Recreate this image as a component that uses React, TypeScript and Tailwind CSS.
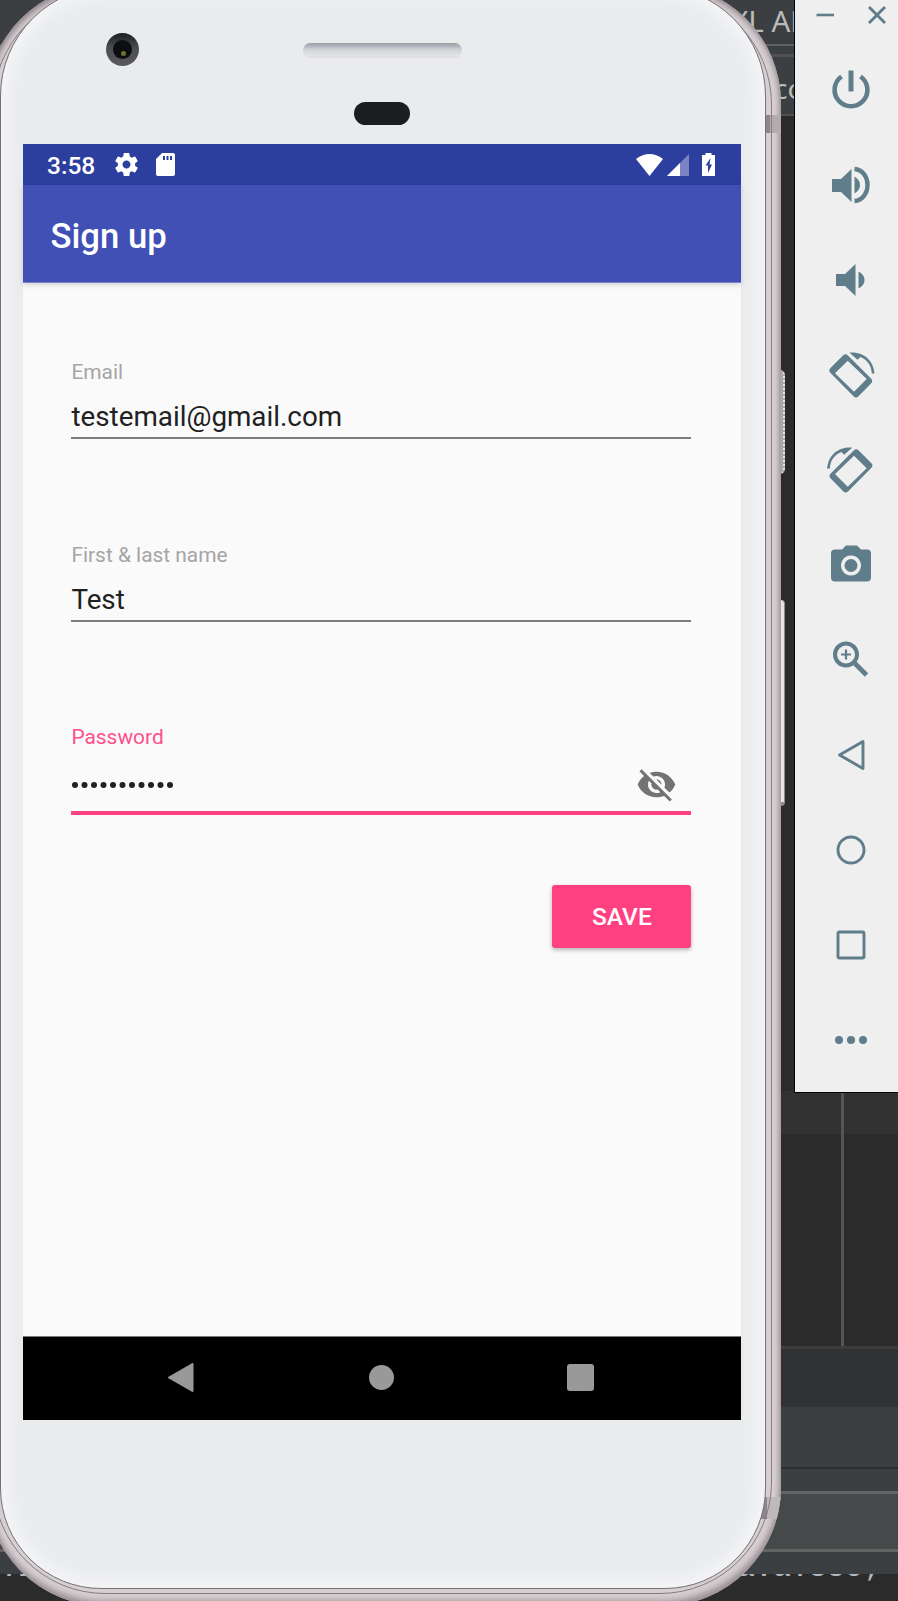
import React from "react";

const SLATE = "#607d8b";

function Tool({ children, size = 48, vb = "0 0 24 24" }: { children: React.ReactNode; size?: number; vb?: string }) {
  return (
    <div className="flex h-[95px] w-full items-center justify-center">
      <svg width={size} height={size} viewBox={vb} fill={SLATE} className="shrink-0 overflow-visible">
        {children}
      </svg>
    </div>
  );
}

function RotateGlyph() {
  return (
    <>
      <path
        fillRule="evenodd"
        d="M15 3.500q2.500-2.500 5 0L43 26.500q2.500 2.500 0 5L30.500 44.300q-2.500 2.500-5 0L2.500 21q-2.500-2.500 0-5zM19.700 8.700L7 21.300l19 18.400 12.700-12.700z"
      />
      <path d="M21.500 .7L29.500 7.800l3-2.800C39.500 8 43.500 13.500 43.800 21.500H46.500C45.500 8.500 35.500-.7 21.500 .7z" />
    </>
  );
}

function Toolbar() {
  return (
    <aside className="absolute top-0 left-[794px] flex h-[1093px] w-[104px] flex-col overflow-hidden border-b border-l border-black bg-[#efefef]">
      <div className="flex h-[42px] shrink-0 items-start">
        <svg width="103" height="30" viewBox="0 0 103 30" fill="none" stroke={SLATE}>
          <path d="M21.500 15H39" strokeWidth="2.600" />
          <path d="M74 7l16 16M90 7l-16 16" strokeWidth="2.900" />
        </svg>
      </div>
      <div className="flex shrink-0 flex-col pl-2">
        <Tool size={36} vb="0 0 36 36">
          <g transform="translate(0 -1.500)">
            <path d="M8.500 6A16.400 16.400 0 1 0 27.500 6" fill="none" stroke={SLATE} strokeWidth="4.600" />
            <path d="M15.500 0h5v21h-5z" />
          </g>
        </Tool>
        <Tool size={38} vb="0 0 38 38">
          <path d="M0 13v13h9l10.500 10V3L9 13zM22.500 10.500v17c3.500-2 5.500-5 5.500-8.500s-2-6.500-5.500-8.500z" />
          <path d="M22.500 3c8 .5 13 8 13 16s-5 15.500-13 16" fill="none" stroke={SLATE} strokeWidth="4.400" />
        </Tool>
        <Tool size={32} vb="0 0 32 32">
          <path d="M1 10v12h9L20.500 32V0L10 10zM23.500 7.500v17c3.500-2 6-4.500 6-8.500s-2.500-6.500-6-8.500z" />
        </Tool>
        <Tool size={46} vb="0 0 46 46">
          <RotateGlyph />
        </Tool>
        <Tool size={46} vb="0 0 46 46">
          <g transform="translate(45.700 0) scale(-1 1)">
            <RotateGlyph />
          </g>
        </Tool>
        <Tool size={40} vb="0 0 40 40">
          <g transform="translate(0 -1.500)">
            <path fillRule="evenodd" d="M4 6h7l4-4h11l4 4h6q4 0 4 4v24q0 4-4 4H4q-4 0-4-4V10q0-4 4-4zm16 6a10 10 0 1 0 .01 0z" />
            <circle cx="20" cy="22" r="6.500" />
          </g>
        </Tool>
        <Tool size={36} vb="0 0 36 36">
          <g fill="none" stroke={SLATE} transform="translate(0 -1.500)">
            <circle cx="13" cy="14" r="11" strokeWidth="4" />
            <path d="M22 23l11.500 11.500" strokeWidth="4.800" />
            <path d="M8 14h10M13 9v10" strokeWidth="2.200" />
          </g>
        </Tool>
        <Tool size={30} vb="0 0 30 30">
          <path d="M27 1.500v27L3.500 15z" fill="none" stroke={SLATE} strokeWidth="2.900" strokeLinejoin="round" />
        </Tool>
        <Tool size={30} vb="0 0 30 30">
          <circle cx="15" cy="15" r="13" fill="none" stroke={SLATE} strokeWidth="2.900" />
        </Tool>
        <Tool size={30} vb="0 0 30 30">
          <rect x="2" y="2" width="26" height="26" rx="1.500" fill="none" stroke={SLATE} strokeWidth="2.900" />
        </Tool>
        <Tool size={32} vb="0 0 32 32">
          <circle cx="4" cy="16" r="4" />
          <circle cx="16" cy="16" r="4" />
          <circle cx="28" cy="16" r="4" />
        </Tool>
      </div>
    </aside>
  );
}

function Ide() {
  return (
    <div className="flex h-[1601px] w-full flex-col bg-[#2b2b2b]">
      <div className="flex h-[44px] shrink-0 bg-[#3c3f41] pl-[731px] font-['Noto_Sans'] text-[29.500px] leading-[42px] text-[#bbbbbb]">XL API</div>
      <div className="h-[2px] shrink-0 bg-[#5e6060]" />
      <div className="h-[8px] shrink-0 bg-[#3c3f41]" />
      <div className="h-[3px] shrink-0 bg-[#515151]" />
      <div className="flex h-[57px] shrink-0 bg-[#3c3f41] pl-[774px] font-['Noto_Sans'] text-[28px] leading-[63px] text-[#bbbbbb]">com</div>
      <div className="h-[2px] shrink-0 bg-[#515151]" />
      <div className="h-[975px] shrink-0" />
      <div className="flex h-[43px] shrink-0 justify-end bg-[#323232] pr-[54px]"><div className="w-[3px] bg-[#555555]" /></div>
      <div className="flex h-[212px] shrink-0 justify-end pr-[54px]"><div className="w-[3px] bg-[#555555]" /></div>
      <div className="h-[3px] shrink-0 bg-[#3a3c3d]" />
      <div className="h-[58px] shrink-0 bg-[#313234]" />
      <div className="h-[60px] shrink-0 bg-[#3c3f41]" />
      <div className="h-[2px] shrink-0 bg-[#2f2f2f]" />
      <div className="h-[22px] shrink-0 bg-[#3c3f41]" />
      <div className="h-[3px] shrink-0 bg-[#646464]" />
      <div className="h-[55px] shrink-0 bg-[#45494a]" />
      <div className="h-[3px] shrink-0 bg-[#646464]" />
      <div className="h-[22px] shrink-0 bg-[#3c3f41]" />
      <div className="flex h-[27px] shrink-0 justify-between overflow-hidden pr-[17px] font-['Liberation_Mono'] text-[30px] leading-[30px] text-[#b5b9bd]">
        <span className="-mt-[21px]">.1</span>
        <span className="-mt-[21px]">java.sso;</span>
      </div>
    </div>
  );
}

function Field({ label, children, accent = false }: { label: string; children: React.ReactNode; accent?: boolean }) {
  return (
    <div className={accent ? "flex h-[91px] flex-col border-b-4 border-[#ff4081]" : "flex h-[80px] flex-col border-b-2 border-[#7c7c7c]"}>
      <span className={accent ? "text-[20.900px] leading-[26px] text-[#ff4f8b]" : "text-[20.900px] leading-[26px] text-[#a5a5a5]"}>{label}</span>
      {children}
    </div>
  );
}

function Screen() {
  return (
    <div className="flex h-[1276px] w-[718px] shrink-0 flex-col bg-[#fafafa] font-[Roboto]">
      <div className="flex h-[41px] shrink-0 items-center bg-[#2c3e9e] pr-[26px] pl-[24px] text-white">
        <span className="w-[68px] pt-[3px] text-[24.500px] font-medium">3:58</span>
        <svg width="23" height="23" viewBox="2 2 20 20" fill="white">
          <path d="M19.430 12.980c.04-.32.07-.64.07-.98s-.03-.66-.07-.98l2.110-1.650c.19-.15.24-.42.12-.64l-2-3.460c-.12-.22-.39-.3-.61-.22l-2.490 1c-.52-.4-1.080-.73-1.690-.98l-.38-2.650C14.460 2.180 14.250 2 14 2h-4c-.25 0-.46.18-.49.42l-.38 2.650c-.61.25-1.170.59-1.690.98l-2.490-1c-.23-.09-.49 0-.61.22l-2 3.460c-.13.22-.07.49.12.64l2.110 1.650c-.04.32-.07.65-.07.98s.03.66.07.98l-2.110 1.650c-.19.15-.24.42-.12.64l2 3.460c.12.22.39.3.61.22l2.490-1c.52.4 1.080.73 1.690.98l.38 2.650c.03.24.24.42.49.42h4c.25 0 .46-.18.49-.42l.38-2.650c.61-.25 1.170-.59 1.690-.98l2.490 1c.23.09.49 0 .61-.22l2-3.460c.12-.22.07-.49-.12-.64l-2.110-1.650zM12 15.500c-1.930 0-3.500-1.570-3.500-3.500s1.570-3.500 3.500-3.500 3.500 1.570 3.500 3.500-1.570 3.500-3.500 3.500z" />
        </svg>
        <svg width="19" height="23" viewBox="0 0 19 23" fill="white" className="ml-[18px]">
          <path fillRule="evenodd" d="M6 0h11q2 0 2 2v19q0 2-2 2H2q-2 0-2-2V6zM7 3v4h2V3zm3.500 0v4h2V3zM14 3v4h2V3z" />
        </svg>
        <div className="flex-1" />
        <svg width="27" height="22" viewBox="0 0 27 22" fill="white">
          <path d="M0 5Q13.500-5 27 5L13.500 22z" />
        </svg>
        <svg width="22" height="22" viewBox="0 0 22 22" className="ml-[4px]">
          <path d="M22 0v22H0z" fill="#7b83c4" />
          <path d="M13 9v13H0z" fill="white" />
        </svg>
        <svg width="13" height="23" viewBox="0 0 13 23" fill="white" className="ml-[13px]">
          <path fillRule="evenodd" d="M3.500 0h6v2H13v21H0V2h3.500zM8.500 5L3.500 12.500H6V20l4-8.500H7.500z" />
        </svg>
      </div>
      <header className="flex h-[98px] shrink-0 items-center border-b border-[#7781c4] bg-[#4050b5] pt-[6px] pl-[27.500px] text-[34.700px] font-medium text-white shadow-[0_2px_5px_rgba(0,0,0,0.15)]">Sign up</header>
      <main className="flex flex-1 flex-col pt-[76px] pr-[49.600px] pl-[48.400px]">
        <Field label="Email">
          <span className="mt-[16px] text-[27.800px] leading-[32px] text-[#212121]">testemail@gmail.com</span>
        </Field>
        <div className="mt-[102.500px]">
          <Field label="First & last name">
            <span className="mt-[16px] text-[27.800px] leading-[32px] text-[#212121]">Test</span>
          </Field>
        </div>
        <div className="mt-[102.500px]">
          <Field label="Password" accent>
            <div className="flex flex-1 items-center justify-between pt-[8px] pr-[14px] pl-[1px]">
              <svg width="102" height="6" viewBox="0 0 102 6" fill="#212121">
                {[0, 1, 2, 3, 4, 5, 6, 7, 8, 9, 10].map((i) => (
                  <circle key={i} cx={3 + i * 9.5} cy="3" r="3" />
                ))}
              </svg>
              <svg width="41" height="41" viewBox="0 0 24 24" fill="#737373">
                <path d="M12 7c2.760 0 5 2.240 5 5 0 .65-.13 1.260-.36 1.830l2.920 2.920c1.510-1.260 2.700-2.890 3.430-4.750-1.730-4.390-6-7.500-11-7.500-1.400 0-2.740.25-3.980.7l2.160 2.160C10.740 7.130 11.350 7 12 7zM2 4.270l2.280 2.280.46.46C3.080 8.300 1.780 10.020 1 12c1.730 4.390 6 7.500 11 7.500 1.550 0 3.030-.3 4.380-.84l.42.42L19.730 22 21 20.730 3.270 3 2 4.270zM7.530 9.800l1.550 1.550c-.05.21-.08.43-.08.65 0 1.660 1.340 3 3 3 .22 0 .44-.03.65-.08l1.550 1.550c-.67.33-1.410.53-2.200.53-2.760 0-5-2.240-5-5 0-.79.2-1.530.53-2.200zm4.310-.78l3.150 3.150.02-.16c0-1.660-1.340-3-3-3l-.17.01z" />
              </svg>
            </div>
          </Field>
        </div>
        <button className="mt-[70px] h-[63px] w-[139px] self-end rounded-[3px] bg-[#ff4081] pt-[2px] text-[24.500px] font-medium text-white shadow-[0_2px_4px_rgba(0,0,0,0.28)]">SAVE</button>
      </main>
      <nav className="flex h-[84px] shrink-0 items-center border-t border-[#777] bg-black pb-[2px] pl-[145px]">
        <svg width="26" height="29" viewBox="0 0 26 29" fill="#999999" stroke="#999999" strokeWidth="2" strokeLinejoin="round">
          <path d="M1 14.500L24.500 1v27z" />
        </svg>
        <div className="ml-[175px] size-[25px] rounded-full bg-[#999999]" />
        <div className="ml-[172.500px] size-[27px] rounded-[3px] bg-[#999999]" />
      </nav>
    </div>
  );
}

function Phone() {
  return (
    <>
      <div className="absolute top-[370px] left-[776px] h-[104px] w-[9px] rounded-r-[5px] border-r-2 border-dotted border-[#e5e5e8] bg-[#a8abb1]" />
      <div className="absolute top-[600px] left-[776px] h-[206px] w-[9px] rounded-r-[4px] border-r border-b-4 border-[#8c8f8c] bg-[#e3e5e3]" />
      <div className="absolute -top-[16px] -left-[14px] h-[1622px] w-[795px] overflow-hidden rounded-[119px] bg-[#d6cfd1] shadow-[inset_-1px_-5px_6px_#9a8f94,inset_1px_3px_6px_#8b7f84]">
        <div className="absolute top-[131px] right-0 h-[18px] w-[30px] bg-linear-to-r from-[#8c858a] from-65% to-[#b3abb0] to-65%" />
        <div className="absolute right-0 bottom-[87px] h-[22px] w-[40px] bg-linear-to-r from-[#8c858a] from-65% to-[#c0b9bc] to-65%" />
        <div className="absolute top-[8px] right-[9px] bottom-[12px] left-[7px] rounded-[112px] border border-[#857c81]" />
      </div>
      <div className="absolute -top-[14px] left-0 flex h-[1603px] w-[766px] flex-col items-start rounded-t-[110px] rounded-b-[101px] border border-[#777176] bg-[#e9ebec] pt-[157px] pl-[22px] shadow-[inset_0_0_18px_7px_#f6f6f9]">
        <Screen />
      </div>
      <div className="absolute top-[33px] left-[106px] flex size-[33px] items-center justify-center rounded-full bg-linear-to-b from-[#1c1f20] via-[#4c4d50] via-45% to-[#5b5b5f]">
        <div className="flex size-[19px] items-center justify-center rounded-full bg-[#0d0e12]">
          <div className="mt-2 ml-0.5 size-[5px] rounded-full bg-[#6d7230]" />
        </div>
      </div>
      <div className="absolute top-[43px] left-[303px] h-[15px] w-[159px] rounded-full border-b-2 border-[#e0e0e2] bg-linear-to-b from-[#969ca3] via-[#cfd2d7] to-[#e4e5e8]" />
      <div className="absolute top-[102px] left-[354px] h-[23px] w-[56px] rounded-full bg-[#1c1d21]" />
    </>
  );
}

export default function App() {
  return (
    <div className="relative h-[1601px] w-[898px] overflow-hidden">
      <Ide />
      <Phone />
      <Toolbar />
    </div>
  );
}
